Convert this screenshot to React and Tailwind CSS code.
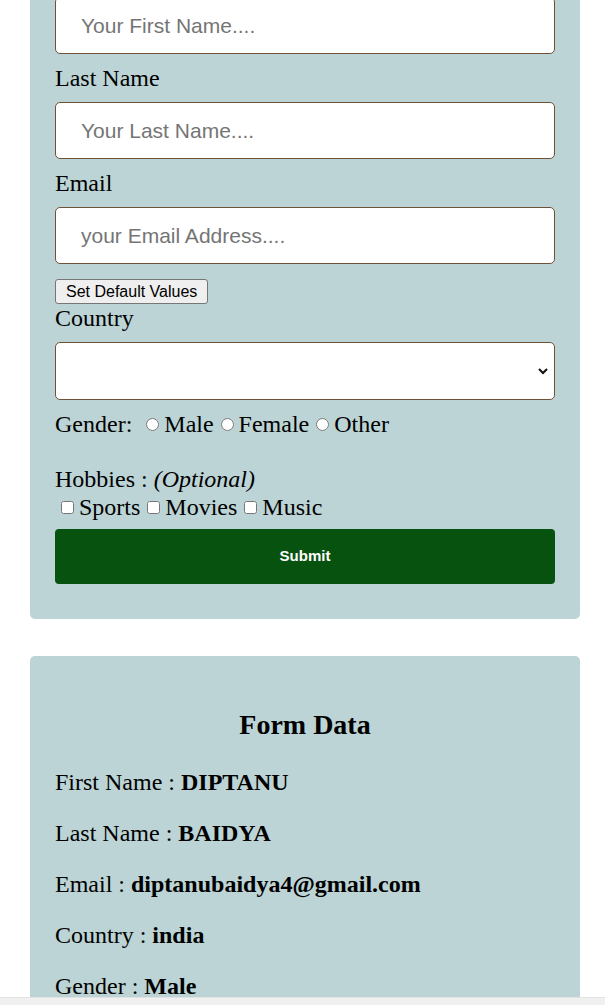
import { useState } from "react";

const formData = [
  ["First Name", "DIPTANU"],
  ["Last Name", "BAIDYA"],
  ["Email", "diptanubaidya4@gmail.com"],
  ["Country", "india"],
  ["Gender", "Male"],
  ["Hobbies", "Sports"],
];

const inputClass =
  "block h-[57px] w-full rounded-[5px] border border-[#6e5236] bg-white pl-[25px] font-['Liberation_Sans',Arial,sans-serif] text-[21px] text-black outline-none placeholder:text-[#757575]";

const Label = ({ children }) => (
  <label className="my-[10px] block leading-[28px]">{children}</label>
);

export default function App() {
  const [country, setCountry] = useState("");

  return (
    <div className="flex h-[1005px] flex-col overflow-hidden bg-white font-['Liberation_Serif','Times_New_Roman',serif] text-[24px] text-black">
      <div className="min-h-0 flex-1 overflow-hidden">
        <form
          className="ml-[30px] mt-[-76px] w-[550px] rounded-[5px] bg-[#bcd4d5] px-[25px] pb-[35px] pt-[25px]"
          onSubmit={(e) => e.preventDefault()}
        >
          <Label>First Name</Label>
          <input className={inputClass} placeholder="Your First Name...." />
          <Label>Last Name</Label>
          <input className={inputClass} placeholder="Your Last Name...." />
          <Label>Email</Label>
          <input className={inputClass} placeholder="your Email Address...." />

          <button
            type="button"
            className="mt-[15px] block h-[25px] rounded-[3px] border border-[#767676] bg-[#efefef] px-[10px] font-['Liberation_Sans',Arial,sans-serif] text-[16px] leading-none text-black"
          >
            Set Default Values
          </button>
          <label className="mb-[10px] block leading-[28px]">Country</label>
          <div className="relative">
            <select
              value={country}
              onChange={(e) => setCountry(e.target.value)}
              className="block h-[58px] w-full appearance-none rounded-[5px] border border-[#6e5236] bg-white px-[10px] font-['Liberation_Sans',Arial,sans-serif] text-[16px]"
            >
              <option value=""></option>
              <option value="india">India</option>
            </select>
            <svg
              className="pointer-events-none absolute right-[7px] top-[24px] h-[10px] w-[10px]"
              viewBox="0 0 10 10"
              fill="none"
              stroke="#111"
              strokeWidth="2"
              aria-hidden
            >
              <path d="M1 3l4 4 4-4" />
            </svg>
          </div>

          <div className="mt-[10px] flex h-[28px] items-center">
            <span>Gender:</span>
            <input type="radio" name="gender" className="ml-[14px] mr-[5px] h-[13px] w-[13px]" />
            <span>Male</span>
            <input type="radio" name="gender" className="ml-[7px] mr-[5px] h-[13px] w-[13px]" />
            <span>Female</span>
            <input type="radio" name="gender" className="ml-[7px] mr-[5px] h-[13px] w-[13px]" />
            <span>Other</span>
          </div>

          <p className="mt-[27px] leading-[28px]">
            Hobbies : <i>(Optional)</i>
          </p>
          <div className="flex h-[28px] items-center">
            <input type="checkbox" className="ml-[6px] mr-[5px] h-[13px] w-[13px]" />
            <span>Sports</span>
            <input type="checkbox" className="ml-[7px] mr-[5px] h-[13px] w-[13px]" />
            <span>Movies</span>
            <input type="checkbox" className="ml-[7px] mr-[5px] h-[13px] w-[13px]" />
            <span>Music</span>
          </div>

          <button
            type="submit"
            className="mt-[8px] block h-[55px] w-full rounded-[4px] bg-[#08520f] font-['Liberation_Sans',Arial,sans-serif] text-[15px] font-bold text-white"
          >
            Submit
          </button>
        </form>

        <div className="ml-[30px] mt-[37px] w-[550px] rounded-[5px] bg-[#bcd4d5] px-[25px] pt-[25px] pb-[25px]">
          <h3 className="mt-[28px] text-center text-[28px] font-bold leading-[32px]">
            Form Data
          </h3>
          <div className="mt-[28px] flex flex-col gap-[24px]">
            {formData.map(([label, value]) => (
              <p key={label} className="leading-[27px]">
                {label} : <b>{value}</b>
              </p>
            ))}
          </div>
        </div>
      </div>
      <div className="h-[8px] shrink-0 border-t border-[#e2e2e2] bg-[#f0f0f0]" />
    </div>
  );
}
